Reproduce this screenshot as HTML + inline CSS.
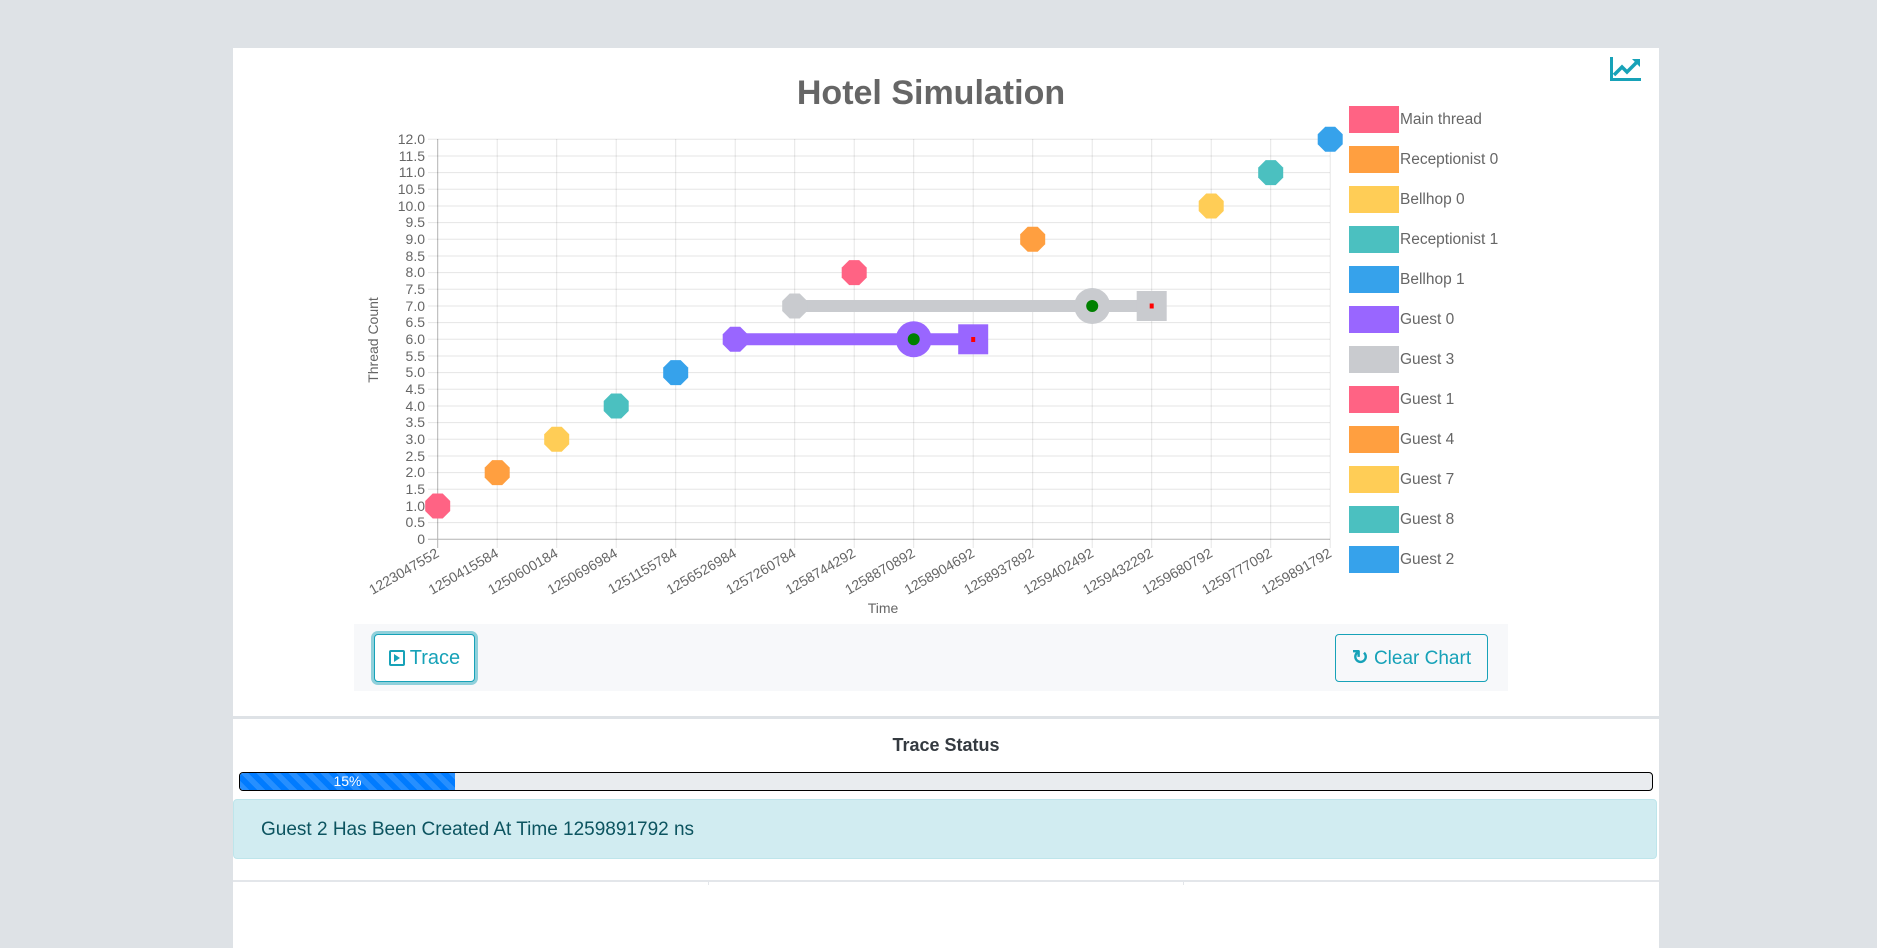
<!DOCTYPE html>
<html><head><meta charset="utf-8">
<style>
html,body{margin:0;padding:0;width:1877px;height:885px;overflow:hidden;background:#dee2e6;font-family:"Liberation Sans",Arial,sans-serif}
.card{position:absolute;left:233px;top:48px;width:1426px;height:900px;background:#fff}
.abs{position:absolute}
</style></head><body>
<div class="card"></div>

<svg class="abs" style="left:0;top:0" width="1877" height="885" xmlns="http://www.w3.org/2000/svg" font-family="Liberation Sans, Arial, sans-serif">
  <text x="931" y="104" text-anchor="middle" font-size="34" font-weight="bold" fill="#666">Hotel Simulation</text>
  <g fill="none" stroke="#17a2b8" stroke-width="3">
    <path d="M1611.5 57 V79.5 H1641"/>
    <path d="M1614 75 L1622 67 L1627 72 L1637 62" stroke-width="3.5"/>
  </g>
  <path d="M1632 59 L1640 59 L1640 67 Z" fill="#17a2b8"/>

  <g stroke="rgba(0,0,0,0.1)" stroke-width="1">
    <path d="M428 139.3H1330M428 156H1330M428 172.6H1330M428 189.3H1330M428 206H1330M428 222.6H1330M428 239.3H1330M428 256H1330M428 272.6H1330M428 289.3H1330M428 306H1330M428 322.6H1330M428 339.3H1330M428 356H1330M428 372.6H1330M428 389.3H1330M428 406H1330M428 422.6H1330M428 439.3H1330M428 456H1330M428 472.6H1330M428 489.3H1330M428 506H1330M428 522.6H1330"/>
    <path d="M497.2 139V548M556.7 139V548M616.2 139V548M675.7 139V548M735.2 139V548M794.7 139V548M854.2 139V548M913.7 139V548M973.2 139V548M1032.7 139V548M1092.2 139V548M1151.7 139V548M1211.2 139V548M1270.7 139V548M1330.2 139V548"/>
  </g>
  <g stroke="rgba(0,0,0,0.3)" stroke-width="1">
    <path d="M437.7 139V548M428 539.3H1330"/>
  </g>

  <g font-size="14" fill="#666" text-anchor="end">
    <text x="425" y="144">12.0</text><text x="425" y="161">11.5</text><text x="425" y="177">11.0</text><text x="425" y="194">10.5</text><text x="425" y="211">10.0</text><text x="425" y="227">9.5</text><text x="425" y="244">9.0</text><text x="425" y="261">8.5</text><text x="425" y="277">8.0</text><text x="425" y="294">7.5</text><text x="425" y="311">7.0</text><text x="425" y="327">6.5</text><text x="425" y="344">6.0</text><text x="425" y="361">5.5</text><text x="425" y="377">5.0</text><text x="425" y="394">4.5</text><text x="425" y="411">4.0</text><text x="425" y="427">3.5</text><text x="425" y="444">3.0</text><text x="425" y="461">2.5</text><text x="425" y="477">2.0</text><text x="425" y="494">1.5</text><text x="425" y="511">1.0</text><text x="425" y="527">0.5</text><text x="425" y="544">0</text>
  </g>
  <text transform="translate(378,340) rotate(-90)" text-anchor="middle" font-size="14" fill="#666">Thread Count</text>
  <text x="883" y="613" text-anchor="middle" font-size="14" fill="#666">Time</text>

  <g font-size="14" fill="#666" text-anchor="end">
    <text transform="translate(440,556) rotate(-30)">1223047552</text>
    <text transform="translate(499.5,556) rotate(-30)">1250415584</text>
    <text transform="translate(559,556) rotate(-30)">1250600184</text>
    <text transform="translate(618.5,556) rotate(-30)">1250696984</text>
    <text transform="translate(678,556) rotate(-30)">1251155784</text>
    <text transform="translate(737.5,556) rotate(-30)">1256526984</text>
    <text transform="translate(797,556) rotate(-30)">1257260784</text>
    <text transform="translate(856.5,556) rotate(-30)">1258744292</text>
    <text transform="translate(916,556) rotate(-30)">1258870892</text>
    <text transform="translate(975.5,556) rotate(-30)">1258904692</text>
    <text transform="translate(1035,556) rotate(-30)">1258937892</text>
    <text transform="translate(1094.5,556) rotate(-30)">1259402492</text>
    <text transform="translate(1154,556) rotate(-30)">1259432292</text>
    <text transform="translate(1213.5,556) rotate(-30)">1259680792</text>
    <text transform="translate(1273,556) rotate(-30)">1259777092</text>
    <text transform="translate(1332.5,556) rotate(-30)">1259891792</text>
  </g>

  <path d="M735.2 339.3H973.2" stroke="#9966ff" stroke-width="12"/>
  <path d="M794.7 306H1151.7" stroke="#c9cbcf" stroke-width="12"/>

  <defs>
    <polygon id="oct" points="-5,-12.5 5,-12.5 12.5,-5 12.5,5 5,12.5 -5,12.5 -12.5,5 -12.5,-5"/>
  </defs>
  <use href="#oct" x="437.7" y="506" fill="#ff6384"/>
  <use href="#oct" x="497.2" y="472.6" fill="#ff9f40"/>
  <use href="#oct" x="556.7" y="439.3" fill="#ffcd56"/>
  <use href="#oct" x="616.2" y="406" fill="#4bc0c0"/>
  <use href="#oct" x="675.7" y="372.6" fill="#36a2eb"/>
  <use href="#oct" x="735.2" y="339.3" fill="#9966ff"/>
  <use href="#oct" x="794.7" y="306" fill="#c9cbcf"/>
  <use href="#oct" x="854.2" y="272.6" fill="#ff6384"/>
  <use href="#oct" x="1032.7" y="239.3" fill="#ff9f40"/>
  <use href="#oct" x="1211.2" y="206" fill="#ffcd56"/>
  <use href="#oct" x="1270.7" y="172.6" fill="#4bc0c0"/>
  <use href="#oct" x="1330.2" y="139.3" fill="#36a2eb"/>

  <circle cx="913.7" cy="339.3" r="18" fill="#9966ff"/>
  <circle cx="913.7" cy="339.3" r="6" fill="green"/>
  <rect x="958.2" y="324.3" width="30" height="30" fill="#9966ff"/>
  <rect x="971.2" y="337" width="4" height="5" fill="red"/>

  <circle cx="1092.2" cy="306" r="18" fill="#c9cbcf"/>
  <circle cx="1092.2" cy="306" r="6" fill="green"/>
  <rect x="1136.7" y="291" width="30" height="30" fill="#c9cbcf"/>
  <rect x="1149.7" y="303.5" width="4" height="5" fill="red"/>

  <g font-size="15.5" fill="#666">
    <rect x="1349" y="106" width="50" height="27" fill="#ff6384"/><text x="1400" y="124">Main thread</text>
    <rect x="1349" y="146" width="50" height="27" fill="#ff9f40"/><text x="1400" y="164">Receptionist 0</text>
    <rect x="1349" y="186" width="50" height="27" fill="#ffcd56"/><text x="1400" y="204">Bellhop 0</text>
    <rect x="1349" y="226" width="50" height="27" fill="#4bc0c0"/><text x="1400" y="244">Receptionist 1</text>
    <rect x="1349" y="266" width="50" height="27" fill="#36a2eb"/><text x="1400" y="284">Bellhop 1</text>
    <rect x="1349" y="306" width="50" height="27" fill="#9966ff"/><text x="1400" y="324">Guest 0</text>
    <rect x="1349" y="346" width="50" height="27" fill="#c9cbcf"/><text x="1400" y="364">Guest 3</text>
    <rect x="1349" y="386" width="50" height="27" fill="#ff6384"/><text x="1400" y="404">Guest 1</text>
    <rect x="1349" y="426" width="50" height="27" fill="#ff9f40"/><text x="1400" y="444">Guest 4</text>
    <rect x="1349" y="466" width="50" height="27" fill="#ffcd56"/><text x="1400" y="484">Guest 7</text>
    <rect x="1349" y="506" width="50" height="27" fill="#4bc0c0"/><text x="1400" y="524">Guest 8</text>
    <rect x="1349" y="546" width="50" height="27" fill="#36a2eb"/><text x="1400" y="564">Guest 2</text>
  </g>
</svg>

<div class="abs" style="left:354px;top:624px;width:1154px;height:67px;background:#f7f8fa"></div>
<div class="abs" style="left:374px;top:634px;width:99px;height:46px;border:1px solid #17a2b8;border-radius:4px;box-shadow:0 0 0 3px #8fd0db;background:#fff;color:#17a2b8;font-size:20px;line-height:46px;text-align:center">
  <span style="display:inline-block;width:16px;height:16px;border:2.5px solid #17a2b8;border-radius:2px;vertical-align:-2px;position:relative;box-sizing:border-box;margin-right:5px"><span style="position:absolute;left:3.5px;top:2px;border-left:6px solid #17a2b8;border-top:4px solid transparent;border-bottom:4px solid transparent"></span></span>Trace</div>
<div class="abs" style="left:1335px;top:634px;width:151px;height:46px;border:1px solid #17a2b8;border-radius:4px;color:#17a2b8;font-size:19px;line-height:46px;text-align:center"><span style="font-weight:bold;font-size:20px">&#x21bb;</span> Clear Chart</div>

<div class="abs" style="left:233px;top:716px;width:1426px;height:3px;background:#dee2e6"></div>
<div class="abs" style="left:233px;top:735px;width:1426px;text-align:center;font-size:18px;font-weight:bold;color:#343a40">Trace Status</div>

<div class="abs" style="left:239px;top:772px;width:1412px;height:17px;border:1px solid #000;border-radius:4px;background:#e9ecef;overflow:hidden">
  <div style="width:215px;height:100%;background-color:#007bff;background-image:linear-gradient(45deg,rgba(255,255,255,.15) 25%,transparent 25%,transparent 50%,rgba(255,255,255,.15) 50%,rgba(255,255,255,.15) 75%,transparent 75%,transparent);background-size:16px 16px;color:#fff;font-size:14px;line-height:17px;text-align:center">15%</div>
</div>

<div class="abs" style="left:233px;top:799px;width:1424px;height:60px;background:#d1ecf1;border:1px solid #bee5eb;border-radius:4px;color:#0c5460;font-size:19px;line-height:60px;box-sizing:border-box;padding-left:27px">Guest 2 Has Been Created At Time 1259891792 ns</div>

<div class="abs" style="left:233px;top:880px;width:1426px;height:2px;background:#e3e6ea"></div>
<div class="abs" style="left:708px;top:880px;width:1px;height:5px;background:#e3e6ea"></div>
<div class="abs" style="left:1183px;top:880px;width:1px;height:5px;background:#e3e6ea"></div>
</body></html>
